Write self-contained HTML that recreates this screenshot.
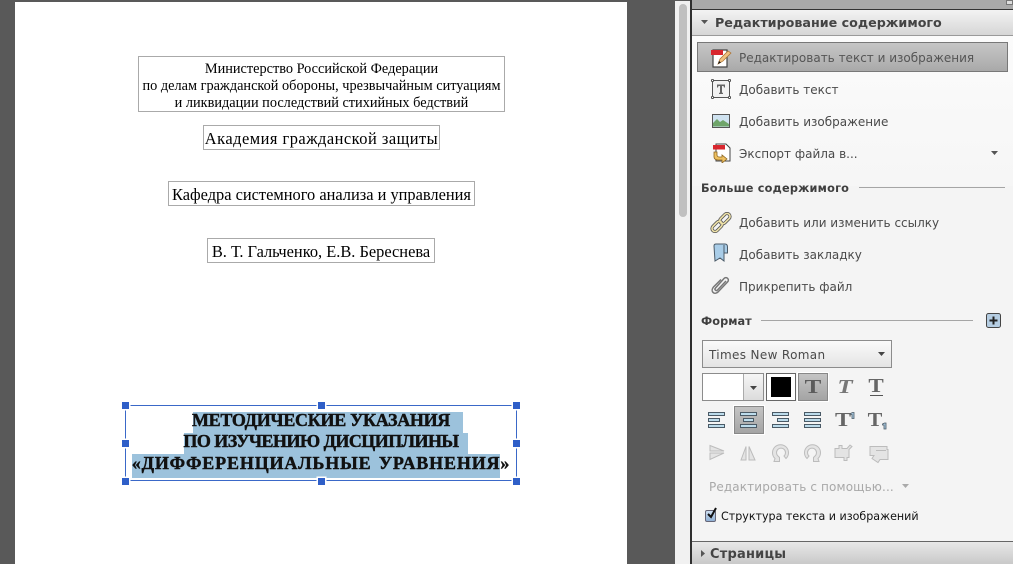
<!DOCTYPE html>
<html><head><meta charset="utf-8"><style>
html,body{margin:0;padding:0}
body{width:1013px;height:564px;position:relative;overflow:hidden;background:#595959;font-family:"DejaVu Sans",sans-serif}
div,span,svg{position:absolute;box-sizing:border-box}
.t{white-space:nowrap;color:#000;font-family:"Liberation Serif",serif;text-align:center}
.box{border:1px solid #aaa;background:#fff}
.l{white-space:nowrap;font-size:12px;color:#4a4a4a;line-height:16px}
.h{white-space:nowrap;font-size:11.3px;font-weight:bold;color:#3f3f3f;line-height:14px}
.sel{background:#9cc2dc}
.hd{width:7px;height:7px;background:#2f5fc8;box-shadow:0 0 0 1.5px #fff}
.btn{width:30px;height:28px;background:linear-gradient(#c4c4c4,#a4a4a4);border:1px solid #888;box-shadow:0 0 0 1px #fff}
.tt{font-family:"Liberation Serif",serif;font-weight:bold;color:#666;font-size:20px;line-height:20px;text-align:center;white-space:nowrap}
.b{left:125px;width:392px;font-size:18px;line-height:21px;font-weight:bold;color:#111;-webkit-text-stroke:.45px #111}
</style></head><body>
<!-- page -->
<div style="left:15px;top:2px;width:612px;height:562px;background:#fff"></div>
<div class="box" style="left:138px;top:56px;width:367px;height:56px"></div>
<div class="t" style="left:138px;top:61px;width:367px;font-size:14.3px;line-height:16.8px">Министерство Российской Федерации<br>по делам гражданской обороны, чрезвычайным ситуациям<br>и ликвидации последствий стихийных бедствий</div>
<div class="box" style="left:203px;top:125px;width:237px;height:25px"></div>
<div class="t" style="left:203px;top:129px;width:237px;font-size:16.4px;line-height:19px;letter-spacing:.5px">Академия гражданской защиты</div>
<div class="box" style="left:168px;top:181px;width:307px;height:25px"></div>
<div class="t" style="left:168px;top:185px;width:307px;font-size:16.4px;line-height:19px">Кафедра системного анализа и управления</div>
<div class="box" style="left:207px;top:238px;width:228px;height:25px"></div>
<div class="t" style="left:207px;top:242px;width:228px;font-size:16.4px;line-height:19px">В. Т. Гальченко, Е.В. Береснева</div>
<!-- selection -->
<div class="sel" style="left:193px;top:412px;width:270px;height:21px"></div>
<div class="sel" style="left:184px;top:433px;width:284px;height:21px"></div>
<div class="sel" style="left:132px;top:454px;width:368px;height:24px"></div>
<div style="left:125px;top:405px;width:392px;height:76px;border:1px solid #3a68c8"></div>
<div class="t b" style="top:410px;letter-spacing:-.3px">МЕТОДИЧЕСКИЕ УКАЗАНИЯ</div>
<div class="t b" style="top:431px;letter-spacing:-.55px">ПО ИЗУЧЕНИЮ ДИСЦИПЛИНЫ</div>
<div class="t b" style="top:453px;letter-spacing:.85px;word-spacing:2px">«ДИФФЕРЕНЦИАЛЬНЫЕ УРАВНЕНИЯ»</div>
<div class="hd" style="left:122px;top:402px"></div><div class="hd" style="left:318px;top:402px"></div><div class="hd" style="left:513px;top:402px"></div>
<div class="hd" style="left:122px;top:440px"></div><div class="hd" style="left:513px;top:440px"></div>
<div class="hd" style="left:122px;top:478px"></div><div class="hd" style="left:318px;top:478px"></div><div class="hd" style="left:513px;top:478px"></div>
<!-- scrollbar -->
<div style="left:675px;top:1px;width:15px;height:563px;background:#f1f1f1"></div>
<div style="left:679px;top:4px;width:8px;height:213px;background:#c0c0c0;border-radius:4px"></div>
<!-- panel -->
<div style="left:690px;top:0;width:323px;height:564px;background:#f4f4f4;border-left:2px solid #2f2f2f"></div>
<div style="left:692px;top:0;width:321px;height:10px;background:#a9a9a9;border-bottom:1px solid #333"></div>
<div style="left:1006px;top:0;width:7px;height:5px;background:#ddd;border:1px solid #777"></div>
<div style="left:692px;top:10px;width:321px;height:26px;background:linear-gradient(#f3f3f3,#d6d6d6);border-bottom:1px solid #9a9a9a"></div>
<div style="left:692px;top:36px;width:321px;height:150px;background:linear-gradient(#fbfbfb,#f6f6f6)"></div>
<svg style="left:700px;top:19px" width="9" height="6"><path d="M1 1h7L4.500 5z" fill="#555"/></svg>
<div class="h" style="left:715px;top:15px;font-size:12.7px;line-height:15px;color:#444">Редактирование содержимого</div>
<!-- active row -->
<div style="left:697px;top:42px;width:311px;height:30px;background:linear-gradient(#c6c6c6,#a9a9a9);border:1px solid #787878"></div>
<div class="l" style="left:739px;top:50px;color:#555">Редактировать текст и изображения</div>
<div class="l" style="left:739px;top:82px">Добавить текст</div>
<div class="l" style="left:739px;top:114px">Добавить изображение</div>
<div class="l" style="left:739px;top:146px">Экспорт файла в...</div>
<svg style="left:990px;top:150px" width="9" height="6"><path d="M1 1h7L4.500 5z" fill="#555"/></svg>
<!-- icon: edit -->
<svg style="left:709px;top:46px" width="24" height="24"><path d="M4 4h14v17H4z" fill="#fff" stroke="#444" stroke-width="1.2"/><rect x="2" y="4" width="12" height="5" fill="#d8262e"/><path d="M9 18l2-5 8-8 3 2-8 8z" fill="#f0c080" stroke="#a87030" stroke-width=".7"/><path d="M9 18l1-3 2 1.500z" fill="#111"/></svg>
<!-- icon: T box -->
<svg style="left:711px;top:79px" width="20" height="20"><rect x="1.500" y="1.500" width="17" height="17" fill="#f2f2f2" stroke="#555"/><path d="M6 5.500h8v3h-1l-.5-1.500H11v6.500l1 .5v1H8v-1l1-.5V7H7.500L7 8.500H6z" fill="#666"/><g fill="#fff" stroke="#333" stroke-width=".8"><circle cx="1.500" cy="1.500" r="1.100"/><circle cx="18.500" cy="1.500" r="1.100"/><circle cx="1.500" cy="18.500" r="1.100"/><circle cx="18.500" cy="18.500" r="1.100"/></g></svg>
<!-- icon: image -->
<svg style="left:712px;top:114px" width="18" height="14"><rect x=".5" y=".5" width="17" height="13" fill="#cfe2f0" stroke="#555"/><path d="M1 12.500V9l4-4 3 3 3-2 6 4v2.500z" fill="#6fa56a"/></svg>
<!-- icon: export -->
<svg style="left:711px;top:143px" width="20" height="20"><path d="M5 1h10l4 4v13H5z" fill="#fff" stroke="#444"/><rect x="2" y="2" width="12" height="4.500" fill="#d8262e"/><path d="M3 9v5c0 2 2 3 4 3h4v3l5-4-5-4v2H8c-1 0-2-1-2-2V9z" fill="#eec060" stroke="#8a6420" stroke-width=".8"/></svg>
<!-- section -->
<div class="h" style="left:701px;top:182px;letter-spacing:.2px">Больше содержимого</div>
<div style="left:859px;top:187px;width:146px;height:1px;background:#a5a5a5"></div>
<div class="l" style="left:739px;top:215px">Добавить или изменить ссылку</div>
<div class="l" style="left:739px;top:247px">Добавить закладку</div>
<div class="l" style="left:739px;top:279px">Прикрепить файл</div>
<!-- link -->
<svg style="left:710px;top:212px" width="22" height="21" fill="none"><g transform="rotate(-45 11 10.500)"><rect x="-.5" y="7.500" width="12" height="6" rx="3" stroke="#555" stroke-width="3.200"/><rect x="10.500" y="7.500" width="12" height="6" rx="3" stroke="#555" stroke-width="3.200"/><rect x="-.5" y="7.500" width="12" height="6" rx="3" stroke="#efe2a8" stroke-width="1.600"/><rect x="10.500" y="7.500" width="12" height="6" rx="3" stroke="#efe2a8" stroke-width="1.600"/></g></svg>
<!-- bookmark -->
<svg style="left:713px;top:243px" width="16" height="21"><path d="M1 3c0-1.500 1-2 2-2h9c1.500 0 2.500 1 2.500 3v6H11v8l-4-3-5 3z" fill="#a9cde8" stroke="#4a5a68"/><path d="M11 2v8" stroke="#4a5a68"/></svg>
<!-- paperclip -->
<svg style="left:711px;top:275px" width="20" height="21" fill="none"><path d="M15 6L6.500 15c-1.500 1.500-3.500-.5-2-2L13 3.500c2.500-2.500 6 1 3.500 3.500L7 17c-4 3.500-8-1-4.500-5L10 4.500" stroke="#777" stroke-width="1.500"/></svg>
<!-- Format -->
<div class="h" style="left:701px;top:315px;letter-spacing:.05px">Формат</div>
<div style="left:761px;top:320px;width:212px;height:1px;background:#a5a5a5"></div>
<svg style="left:986px;top:313px" width="15" height="15"><rect x=".5" y=".5" width="14" height="14" rx="2" fill="#b5cde2" stroke="#444"/><path d="M3.500 7.500h8M7.500 3.500v8" stroke="#222" stroke-width="2"/></svg>
<!-- font select -->
<div style="left:702px;top:340px;width:190px;height:28px;background:linear-gradient(#fafafa,#e4e4e4);border:1px solid #8c8c8c"></div>
<div class="l" style="left:709px;top:347px;letter-spacing:.35px">Times New Roman</div>
<svg style="left:877px;top:351px" width="9" height="6"><path d="M1 1h7L4.500 5z" fill="#444"/></svg>
<!-- color row -->
<div style="left:702px;top:373px;width:62px;height:28px;background:#fff;border:1px solid #8c8c8c"></div>
<div style="left:743px;top:374px;width:20px;height:26px;background:linear-gradient(#f6f6f6,#dcdcdc);border-left:1px solid #aaa"></div>
<svg style="left:749px;top:385px" width="9" height="6"><path d="M1 1h7L4.500 5z" fill="#444"/></svg>
<div style="left:766px;top:373px;width:30px;height:28px;background:#fff;border:1px solid #666"></div>
<div style="left:771px;top:377px;width:20px;height:20px;background:#000"></div>
<div class="btn" style="left:798px;top:373px"></div>
<div class="tt" style="left:798px;top:377px;width:30px;color:#5c5c5c;transform:scaleX(1.25)">T</div>
<div class="tt" style="left:830px;top:377px;width:30px;font-style:italic;color:#777;transform:scaleX(1.25)">T</div>
<div class="tt" style="left:861px;top:376px;width:30px;transform:scaleX(1.15)">T</div>
<div style="left:870px;top:395px;width:13px;height:1px;background:#555"></div>
<!-- align row -->
<div class="btn" style="left:734px;top:406px"></div>
<svg style="left:706px;top:411px" width="190" height="20" fill="#bcdcec" stroke="#4a5a66" stroke-width="1">
<path d="M2.500 1.500h16v3h-16zM2.500 7.500h11v3h-11zM2.500 13.500h16v3h-16z"/>
<path d="M34.500 1.500h16v3h-16zM37.500 7.500h10v3h-10zM34.500 13.500h16v3h-16z"/>
<path d="M66.500 1.500h16v3h-16zM71.500 7.500h11v3h-11zM66.500 13.500h16v3h-16z"/>
<path d="M98.500 1.500h16v3h-16zM98.500 7.500h16v3h-16zM98.500 13.500h16v3h-16z"/>
<path d="M144.500 2.500l2-1h1.500v6h-2V3.500h-1.500zM176.500 13l2-1h1.500v6h-2v-4h-1.500z" fill="#a8c8e0" stroke-width=".8"/>
</svg>
<div class="tt" style="left:829px;top:410px;width:28px;transform:scaleX(1.2)">T</div>
<div class="tt" style="left:861px;top:410px;width:28px;transform:scaleX(1.1)">T</div>
<!-- disabled row -->
<svg style="left:709px;top:444px" width="180" height="20" fill="#e4e4e4" stroke="#bcbcbc" stroke-width="1">
<path d="M1 1.500L15 7H1zM1 9H15L1 15.500z"/>
<path d="M32 16L37 2.500V16zM40 2.500L46 16H40z"/>
<path d="M66 14.500a8 8 0 1 1 11 0l-2-2.500a4.500 4.500 0 1 0-6 0l1.500 1.500v4h-5.500z"/>
<path d="M109 14.500a8 8 0 1 0-11 0l2-2.500a4.500 4.500 0 1 1 6 0l-1.500 1.500v4h5.500z"/>
<path d="M126 4.500h4v-3h3v3h5l3-3.500 2 1.500-3 3v8h-2v3h-3v-3h-9z"/>
<path d="M161 2.500h17v3h1v10h-8l-2 3-6-4 2-3h-4zM167 6.500h10"/>
</svg>
<div class="l" style="left:709px;top:479px;letter-spacing:.13px;color:#a8a8a8">Редактировать с помощью...</div>
<svg style="left:901px;top:483px" width="9" height="6"><path d="M1 1h7L4.500 5z" fill="#aaa"/></svg>
<!-- checkbox -->
<div style="left:705px;top:510px;width:11px;height:12px;background:linear-gradient(#cfe0f2,#8fb0d4);border:1px solid #667;border-radius:2px"></div>
<svg style="left:705px;top:507px" width="13" height="13"><path d="M3 7l3 3 5-9" fill="none" stroke="#111" stroke-width="2"/></svg>
<div class="l" style="left:721px;top:509px;color:#111;font-size:11.1px">Структура текста и изображений</div>
<!-- bottom -->
<div style="left:692px;top:541px;width:321px;height:23px;background:linear-gradient(#e8e8e8,#c9c9c9);border-top:1px solid #666"></div>
<svg style="left:700px;top:549px" width="6" height="9"><path d="M1 1v7l4-3.500z" fill="#555"/></svg>
<div class="h" style="left:710px;top:547px;font-size:13px;line-height:16px;letter-spacing:.2px;color:#444">Страницы</div>
</body></html>
